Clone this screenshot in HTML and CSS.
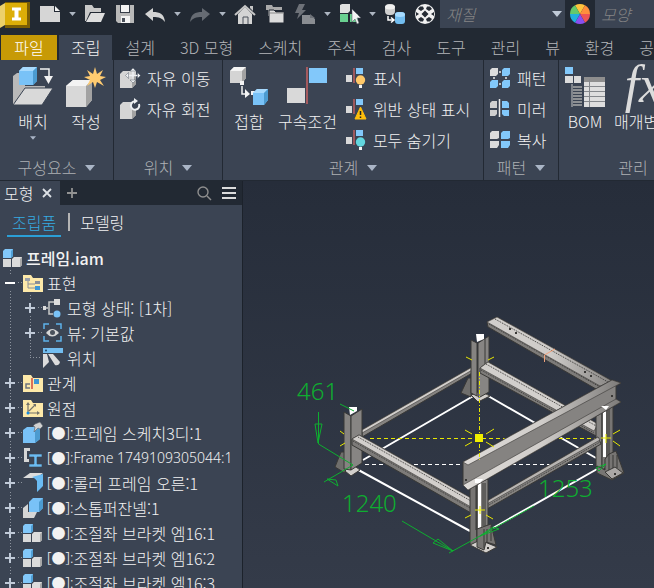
FILE: index.html
```html
<!DOCTYPE html>
<html lang="ko">
<head>
  <meta charset="UTF-8">
  <meta name="viewport" content="width=device-width, initial-scale=1.0">
  <title>프레임.iam</title>
  <link rel="stylesheet" href="styles.css">
</head>
<body>
  <!-- shared icon shapes -->
  <svg class="defs" width="0" height="0" aria-hidden="true">
    <symbol id="caret" viewBox="0 0 10 6"><path d="M0 0h10L5 6z"/></symbol>
    <symbol id="folder" viewBox="0 0 20 18"><path d="M0 1h8l2 3h10v14H0z" fill="#fde9a9"/></symbol>
    <symbol id="assembly" viewBox="0 0 20 20">
      <path d="M0 3l2-2h8v7l-2 2H0z" fill="#82c8fa"/><path d="M8 3l2-2v7l-2 2z" fill="#4f9fd6"/>
      <path d="M0 11h8v8H0z" fill="#d9d9d9"/>
      <path d="M9 11l2-2h8v8l-2 2H9z" fill="#dcdcdc"/><path d="M17 11l2-2v8l-2 2z" fill="#a9a9a9"/>
    </symbol>
    <symbol id="relation" viewBox="0 0 20 20">
      <path d="M0 7h6v7H0z" fill="#d9d9d9"/><path d="M8 0v15" stroke="#c96262" stroke-width="1.4"/>
      <path d="M10 0h7v6h-7z" fill="#82c8fa"/>
    </symbol>
  </svg>

  <div class="app">
    <header class="quickbar">
      <div class="tools">
        <button class="logo" aria-label="Inventor">
          <svg viewBox="0 0 30 28" width="30" height="28">
            <path d="M5 2h25v26H5z" fill="#7b5e04"/><path d="M0 6l5-3v22l-5 3z" fill="#ecd06a"/><path d="M5 3h22v22H5z" fill="#dcae08"/>
            <path d="M12 7.500h9v3h-2.500v7h2.500v3h-9v-3h2.500v-7H12z" fill="#fff"/>
          </svg>
        </button>
        <button aria-label="새로 만들기"><svg viewBox="0 0 20 20"><path d="M0 2h14v6h6v10H0z" fill="#d6d6d6"/><path d="M15 2l5 5h-5z" fill="#f2f2f2"/></svg></button>
        <button class="drop" aria-label="새로 만들기 목록"><svg><use href="#caret"/></svg></button>
        <button aria-label="열기"><svg viewBox="0 0 20 20"><path d="M0 1h7l2 3h7v4H5l-4 9H0z" fill="#c9c9c9"/><path d="M6 9h14l-4 9H1z" fill="#dedede"/></svg></button>
        <button aria-label="저장"><svg viewBox="0 0 20 20"><path d="M1 1h18v18H3l-2-2z" fill="#b9b9b9"/><path d="M5 1h10v8H5z" fill="#363d48"/><path d="M6 1h8v7H6zM6 12h9v7H6z" fill="#f4f4f4"/><path d="M7 14h3v4H7z" fill="#4a505a"/></svg></button>
        <button aria-label="명령 취소"><svg viewBox="0 0 20 20"><path d="M0 10l8-6v4c7 0 11 2 12 10-3-4-6-5-12-5v4z" fill="#d4d4d4"/></svg></button>
        <button class="drop" aria-label="취소 목록"><svg><use href="#caret"/></svg></button>
        <button aria-label="명령 복구"><svg viewBox="0 0 20 20"><path d="M20 10l-8-6v4C5 8 1 10 0 18c3-4 6-5 12-5v4z" fill="#666b73"/></svg></button>
        <button class="drop" aria-label="복구 목록"><svg><use href="#caret"/></svg></button>
        <button aria-label="홈"><svg viewBox="0 0 20 20"><path d="M3 10v10h14V10l-7-7z" fill="#d4d4d4"/><path d="M0 11L10 2l10 9" fill="none" stroke="#c6c6c6" stroke-width="2"/><path d="M15 2h3v5l-3-3z" fill="#c6c6c6"/><path d="M8 20v-7h5v7" fill="#d4d4d4" stroke="#4a505a"/></svg></button>
        <button aria-label="프로젝트"><svg viewBox="0 0 20 20"><path d="M1 1h6l1 2h9v3H9v6H3V6H1z" fill="#aaa"/><path d="M4 6h5l2 2h8v11H4z" fill="#dcdcdc" stroke="#222933"/><path d="M5 9h14" stroke="#8b8b8b"/></svg></button>
        <button aria-label="업데이트"><svg viewBox="0 0 20 20"><path d="M4 0h6L7 6h4L2 15l2-6H0z" fill="#6d7178"/><path d="M7 11h8l5 4v5H7z" fill="#8a8d92"/><path d="M15 10l5 4h-5z" fill="#6d7178"/></svg></button>
        <button class="drop" aria-label="업데이트 목록"><svg><use href="#caret"/></svg></button>
        <button aria-label="선택 우선순위"><svg viewBox="0 0 20 20"><path d="M0 1l2-1h8v7l-2 2H0z" fill="#e0e0e0"/><path d="M0 10h8v8H0zM10 10h8v8h-8z" fill="#69cf90"/><path d="M12 5v13l3-3 2 5 2-1-2-5h4z" fill="#f4f4f4" stroke="#4c535e" stroke-width=".5"/></svg></button>
        <button class="drop" aria-label="선택 목록"><svg><use href="#caret"/></svg></button>
        <button aria-label="대치"><svg viewBox="0 0 20 20"><rect x="0" y="0" width="10" height="11" rx="4" fill="#cfcfcf"/><ellipse cx="5" cy="3" rx="5" ry="2.500" fill="#f0f0f0"/><path d="M3 12v4h5M6 13.500l3 2.500-3 2.500" fill="none" stroke="#fff" stroke-width="1.500"/><rect x="10" y="8" width="10" height="12" rx="3" fill="#72bdf0"/><ellipse cx="15" cy="10.500" rx="5" ry="2.500" fill="#a6dbff"/></svg></button>
        <button aria-label="재질 편집"><svg viewBox="0 0 20 20"><circle cx="10" cy="10" r="10" fill="#f2f2f2"/><g fill="#252b34"><path d="M10 6.500l3.500 3.500-3.500 3.500L6.500 10zM5 2.500l3 0 1 2.500-3 2-3-2zM12 2.500h3l2 2.500-3 2-3-2zM5 17.500h3l1-2.500-3-2-3 2zM12 17.500h3l2-2.500-3-2-3 2z"/><path d="M1 8l3 2-3 2zM19 8l-3 2 3 2z"/></g></svg></button>
      </div>
      <div class="appearance">
        <div class="picker">
          <select aria-label="재질"><option>재질</option></select>
          <svg><use href="#caret"/></svg>
        </div>
        <button aria-label="모양 편집"><svg viewBox="0 0 20 20"><path d="M10 10L5 1.340A10 10 0 0 1 15 1.340z" fill="#ffc33c"/><path d="M10 10L15 1.340A10 10 0 0 1 20 10z" fill="#ff8f3c"/><path d="M10 10H20A10 10 0 0 1 15 18.660z" fill="#ee5555"/><path d="M10 10l5 8.660a10 10 0 0 1-10 0z" fill="#8a4ff0"/><path d="M10 10L5 18.660A10 10 0 0 1 0 10z" fill="#22b0dd"/><path d="M10 10H0A10 10 0 0 1 5 1.340z" fill="#65c96b"/></svg></button>
        <div class="picker">
          <select aria-label="모양"><option>모양</option></select>
          <svg><use href="#caret"/></svg>
        </div>
      </div>
    </header>

    <nav class="tabs">
      <button class="tab file">파일</button>
      <button class="tab active">조립</button>
      <button class="tab">설계</button>
      <button class="tab">3D 모형</button>
      <button class="tab">스케치</button>
      <button class="tab">주석</button>
      <button class="tab">검사</button>
      <button class="tab">도구</button>
      <button class="tab">관리</button>
      <button class="tab">뷰</button>
      <button class="tab">환경</button>
      <button class="tab">공동</button>
    </nav>

    <section class="ribbon">
      <div class="group">
        <div class="commands centered">
          <button class="large">
            <svg viewBox="0 0 40 40"><path d="M0 9l4-3h8v13h20v3L12 37H0z" fill="#b9b9b9"/><path d="M0 38l12-17h28L29 38z" fill="#d9d9d9" stroke="#3b4453" stroke-width="1"/><path d="M6 4l4-4h14v14l-4 4H6z" fill="#79c2f7"/><path d="M6 4l4-4h14l-4 4z" fill="#a8dafd"/><path d="M20 4l4-4v14l-4 4z" fill="#4c9bd0"/><path d="M27 2h9v8" fill="none" stroke="#f2f2f2" stroke-width="1.500"/><path d="M31 9h9l-4.500 8z" fill="#f2f2f2"/></svg>
            <span>배치</span>
            <svg class="more"><use href="#caret"/></svg>
          </button>
          <button class="large">
            <svg viewBox="0 0 40 40"><path d="M0 19l7-6h19v20l-6 7H0z" fill="#d8d8d8"/><path d="M0 19l7-6h19l-6 6z" fill="#f3f3f3"/><path d="M20 19l6-6v20l-6 7z" fill="#a2a2a2"/><path d="M29 0l2 7 6-4-3 6 6 1-6 3 4 6-7-4-2 6-2-6-6 4 3-6-6-3 6-1-3-6 6 4z" fill="#ffcb70"/></svg>
            <span>작성</span>
          </button>
        </div>
        <h2>구성요소 <svg><use href="#caret"/></svg></h2>
      </div>

      <div class="group">
        <div class="commands">
          <div class="stack">
            <button class="small"><svg viewBox="0 0 20 20"><path d="M0 6l3-3h13v13l-4 4H0z" fill="#d5d5d5"/><path d="M12 10l4-4v10l-4 4z" fill="#a2a2a2"/><path d="M13 2v11M7 7.500h12" stroke="#eef0f2" stroke-width="1.500"/><path d="M13 0l3 3h-6zM13 15l3-3h-6zM5.500 7.500l3-3v6zM20.500 7.500l-3-3v6z" fill="#eef0f2" stroke="#3b4453" stroke-width=".4"/></svg>자유 이동</button>
            <button class="small"><svg viewBox="0 0 20 20"><path d="M0 6l3-3h13v13l-4 4H0z" fill="#d5d5d5"/><path d="M12 10l4-4v10l-4 4z" fill="#a2a2a2"/><circle cx="15" cy="6.500" r="4.500" fill="#3b4453"/><path d="M19 5a4.200 4.200 0 1 1-4-2.700" fill="none" stroke="#eef0f2" stroke-width="2"/><path d="M14-1v6l4-3z" fill="#eef0f2"/></svg>자유 회전</button>
          </div>
        </div>
        <h2>위치 <svg><use href="#caret"/></svg></h2>
      </div>

      <div class="group">
        <div class="commands">
          <button class="large">
            <svg viewBox="0 0 40 40"><path d="M1 4l4-4h12v11l-4 5H1z" fill="#d4d4d4"/><path d="M1 4l4-4h12l-4 4z" fill="#f4f4f4"/><path d="M13 4l4-4v11l-4 5z" fill="#a2a2a2"/><path d="M13 19v8h7" fill="none" stroke="#f4f4f4" stroke-width="1.500"/><path d="M16 22l5 5-5 4zM11 14h4v4h-4zM22 24h4v4h-4z" fill="#f4f4f4"/><path d="M24 26l4-4h11v11l-4 5H24z" fill="#79c2f7"/><path d="M24 26l4-4h11l-4 4z" fill="#a8dafd"/><path d="M35 26l4-4v11l-4 5z" fill="#4c9bd0"/></svg>
            <span>접합</span>
          </button>
          <button class="large">
            <svg viewBox="0 0 40 40"><path d="M0 21h18v15H0z" fill="#d9d9d9"/><path d="M20 0v37" stroke="#c96262" stroke-width="1.500"/><path d="M22 1h18v15H22z" fill="#82c8fa"/></svg>
            <span>구속조건</span>
          </button>
          <div class="stack">
            <button class="small"><svg viewBox="0 0 20 20"><use href="#relation" width="20" height="20"/><circle cx="14.500" cy="12" r="4.700" fill="#ffc868"/><path d="M13 17h3v3h-3z" fill="#f4f4f4"/></svg>표시</button>
            <button class="small"><svg viewBox="0 0 20 20"><use href="#relation" width="20" height="20"/><path d="M14.500 8L20 20H9z" fill="#ffbe0a" stroke="#ffbe0a"/><path d="M14.500 12v4M14.500 17.500v1.500" stroke="#222" stroke-width="1.500"/></svg>위반 상태 표시</button>
            <button class="small"><svg viewBox="0 0 20 20"><use href="#relation" width="20" height="20"/><circle cx="14.500" cy="12" r="4.700" fill="#62d6de"/><path d="M13 17h3v3h-3z" fill="#f4f4f4"/></svg>모두 숨기기</button>
          </div>
        </div>
        <h2>관계 <svg><use href="#caret"/></svg></h2>
      </div>

      <div class="group">
        <div class="commands">
          <div class="stack">
            <button class="small"><svg viewBox="0 0 20 20"><path d="M0 2l2-2h6v6L6 8H0z" fill="#dcdcdc"/><path d="M12 2l2-2h6v6l-2 2h-6zM0 14l2-2h6v6l-2 2H0zM12 14l2-2h6v6l-2 2h-6z" fill="#82c8fa"/><path d="M9 4h2M4 9v2M9 16h2M16 9v2" stroke="#e8e8e8" stroke-width="1.500"/></svg>패턴</button>
            <button class="small"><svg viewBox="0 0 20 20"><path d="M0 4l2-2h5v7H0zM0 11h7v4l-2 2H0z" fill="#d0d0d0"/><path d="M9.500 0v18" stroke="#e8e8e8" stroke-width="1.500"/><path d="M12 2h5l2 2v5h-7zM12 11h7v6h-5l-2-2z" fill="#82c8fa"/></svg>미러</button>
            <button class="small"><svg viewBox="0 0 20 20"><path d="M0 3l2-2h7v7L7 9H0zM0 11h9v4l-2 3H0z" fill="#dcdcdc"/><path d="M11 3l2-2h7v7l-2 1h-7zM11 11h9v4l-2 3h-7z" fill="#82c8fa"/></svg>복사</button>
          </div>
        </div>
        <h2>패턴 <svg><use href="#caret"/></svg></h2>
      </div>

      <div class="group">
        <div class="commands">
          <button class="large">
            <svg viewBox="0 0 40 40"><path d="M0 0h8v7H0z" fill="#82c8fa"/><path d="M0 9h8v7H0zM9 9h7v7H9z" fill="#dcdcdc"/><path d="M7 17v23" stroke="#c4c4c4"/><path d="M8 20h9M8 23h9M8 26h9M8 29h9M8 32h9M8 35h9M8 38h9" stroke="#aaa" stroke-width="1.500"/><path d="M19 10h21v5H19z" fill="#8e8e8e"/><path d="M19 15h21v25H19z" fill="#dedede"/><path d="M19 19.500h21M19 24.500h21M19 29.500h21M19 34.500h21M24.500 12v28" stroke="#85888c"/></svg>
            <span>BOM</span>
          </button>
          <button class="large">
            <span class="fx">fx</span>
            <span>매개변수</span>
          </button>
        </div>
        <h2>관리 <svg><use href="#caret"/></svg></h2>
      </div>
    </section>

    <main>
      <aside class="browser">
        <div class="browser-tabs">
          <div class="browser-tab">모형
            <button aria-label="닫기"><svg viewBox="0 0 10 10" width="10" height="10"><path d="M1 1l8 8M9 1L1 9" stroke="#dde1e6" stroke-width="1.800"/></svg></button>
          </div>
          <button aria-label="패널 추가"><svg viewBox="0 0 10 10" width="10" height="10"><path d="M5 0v10M0 5h10" stroke="#929292" stroke-width="1.800"/></svg></button>
          <span class="spacer"></span>
          <button aria-label="검색"><svg viewBox="0 0 14 14" width="14" height="14"><circle cx="6" cy="6" r="5" fill="none" stroke="#8f8f8f" stroke-width="1.400"/><path d="M10 10l4 4" stroke="#8f8f8f" stroke-width="1.500"/></svg></button>
          <button aria-label="메뉴"><svg viewBox="0 0 14 12" width="14" height="12"><path d="M0 1h14M0 6h14M0 11h14" stroke="#dcdcdc" stroke-width="2"/></svg></button>
        </div>
        <div class="modes">
          <button class="mode selected">조립품</button>
          <button class="mode">모델링</button>
        </div>

        <div class="root"><svg><use href="#assembly"/></svg>프레임.iam</div>
        <ul class="tree">
          <li>
            <div class="node">
              <button class="expander open" aria-label="접기"></button>
              <svg viewBox="0 0 20 20"><use href="#folder" width="20" height="18" y="1"/><path d="M5 7v8h7M5 11h7" fill="none" stroke="#8a8f98"/><path d="M2 5h5v3H2z" fill="#9aa0a8"/><path d="M12 8h5v3h-5z" fill="#8a8f98"/><path d="M12 13h5v4h-5z" fill="#3e97d6"/></svg>
              표현
            </div>
            <ul class="branch">
              <li class="node">
                <button class="expander" aria-label="펼치기"></button>
                <svg viewBox="0 0 20 20"><path d="M1 10h4M12 4H6v12h4" fill="none" stroke="#c9c9c9" stroke-width="1.500"/><path d="M0 8h3v4H0zM11 1h6v6h-6z" fill="#dcdcdc"/><circle cx="14" cy="16" r="3.500" fill="#79c2f7"/></svg>
                모형 상태: [1차]
              </li>
              <li class="node">
                <button class="expander" aria-label="펼치기"></button>
                <svg viewBox="0 0 20 20"><path d="M1 6V1h5M13 1h5v5M18 13v5h-5M6 18H1v-5" fill="none" stroke="#5eb1ea" stroke-width="1.500"/><path d="M3 10q6-8 13 0-7 7-13 0z" fill="#d6d6d6"/><circle cx="9.500" cy="9.500" r="2.500" fill="#4a515c"/></svg>
                뷰: 기본값
              </li>
              <li class="node leaf">
                <svg viewBox="0 0 20 20"><path d="M0 0h20v5H0z" fill="#72bdf0"/><path d="M0 6h4l2 8-6 6zM5 6h5l7 8q-1 4-5 3z" fill="#dcdcdc"/><circle cx="3" cy="2.500" r="1" fill="#246"/></svg>
                위치
              </li>
            </ul>
          </li>
          <li class="node">
            <button class="expander" aria-label="펼치기"></button>
            <svg viewBox="0 0 20 20"><use href="#folder" width="20" height="18" y="1"/><path d="M7 11H3v4h4" fill="none" stroke="#6e747d" stroke-width="1.500"/><path d="M9 5v11" stroke="#d04a3f" stroke-width="1.500"/><path d="M11 6h5v5h-5z" fill="#3e97d6"/></svg>
            관계
          </li>
          <li class="node">
            <button class="expander" aria-label="펼치기"></button>
            <svg viewBox="0 0 20 20"><use href="#folder" width="20" height="18" y="1"/><path d="M5 15V6M5 15h10M6 13l6-6" stroke="#74736a" stroke-width="1.200"/><path d="M3 7l2-3 2 3zM14 13l3 2-3 2zM10 6h3v3z" fill="#74736a"/><circle cx="5" cy="15" r="1.500" fill="#168be0"/></svg>
            원점
          </li>
          <li class="node">
            <button class="expander" aria-label="펼치기"></button>
            <svg viewBox="0 0 20 20"><path d="M0 7l4-3h13v12l-5 4H0z" fill="#79c2f7"/><path d="M12 8l5-4v12l-5 4z" fill="#4c9bd0"/><path d="M12 1l5-2 3 4-3 3-2-1-4 4 1-5-2-1z" fill="#d0d0d0" stroke="#555c67" stroke-width=".6"/></svg>
            <span class="mark">[●]:</span>프레임 스케치3디:1
          </li>
          <li class="node">
            <button class="expander" aria-label="펼치기"></button>
            <svg viewBox="0 0 20 20"><path d="M7 1.500H2.500v11H6" fill="none" stroke="#d6d6d6" stroke-width="3"/><path d="M6 6h13v3h-5v7h5v3H6v-3h5V9H6z" fill="#6bbcf3" stroke="#3b4453" stroke-width=".6"/></svg>
            <span class="mark">[●]:Frame 1749109305044:1</span>
          </li>
          <li class="node">
            <button class="expander" aria-label="펼치기"></button>
            <svg viewBox="0 0 20 20"><path d="M0 5l7-5h13l-6 5z" fill="#dcdcdc"/><path d="M9 4l11-3v12l-6 6V8q-2-3-5-4z" fill="#6bbcf3"/></svg>
            <span class="mark">[●]:</span>롤러 프레임 오른:1
          </li>
          <li class="node">
            <button class="expander" aria-label="펼치기"></button>
            <svg viewBox="0 0 20 20"><path d="M0 10l5-4v8h9l-3 6H0z" fill="#d6d6d6"/><path d="M6 4l4-4h10v10l-4 4H6z" fill="#79c2f7"/><path d="M16 4l4-4v10l-4 4z" fill="#4c9bd0"/></svg>
            <span class="mark">[●]:</span>스톱퍼잔넬:1
          </li>
          <li class="node">
            <button class="expander" aria-label="펼치기"></button>
            <svg><use href="#assembly"/></svg>
            <span class="mark">[●]:</span>조절좌 브라켓 엠16:1
          </li>
          <li class="node">
            <button class="expander" aria-label="펼치기"></button>
            <svg><use href="#assembly"/></svg>
            <span class="mark">[●]:</span>조절좌 브라켓 엠16:2
          </li>
          <li class="node">
            <button class="expander" aria-label="펼치기"></button>
            <svg><use href="#assembly"/></svg>
            <span class="mark">[●]:</span>조절좌 브라켓 엠16:3
          </li>
        </ul>
      </aside>

      <section class="viewport">
        <svg class="model" viewBox="243 181 411 407" preserveAspectRatio="xMinYMin meet" role="img" aria-label="프레임 모형">
          <!-- base sketch -->
          <g stroke="#fff" stroke-width="2" fill="none">
            <path d="M475 395L363 460M483 393L596 458M353 467L470 531M493 528L606 464"/>
            <path d="M365 464.500H597" stroke-width="1" stroke-dasharray="4 3"/>
          </g>
          <g stroke="#e8e800" fill="none">
            <path d="M370 438.500H606" stroke-dasharray="4 3"/>
          </g>

          <g stroke="#393836" stroke-width="1" stroke-linejoin="round">
            <!-- back left rail -->
            <path d="M362 430L474 366V372L362 437z" fill="#858381"/>
            <path d="M362 430L474 366V369L362 433z" fill="#d2cfcc" stroke-width=".6"/>
            <!-- back post -->
            <path d="M468 378L461 393 471 397V378z" fill="#6f6e6c"/>
            <path d="M471 395L478 402 490 396 480 391z" fill="#d2cfcc"/>
            <path d="M471 340L477 343V396L471 393z" fill="#858381"/>
            <path d="M478 343L489 336V392L480 397H478z" fill="#878583"/>
            <path d="M485 339V366" fill="none"/>
            <path d="M476 334H484V339L477 342z" fill="#fff" stroke="none"/>
            <!-- back right rail -->
            <path d="M480 368L488 362 598 424V437L480 373z" fill="#7d7b79"/>
            <path d="M480 368L488 362 598 424 594 431z" fill="#d2cfcc" stroke-width=".6"/>
            <path d="M486 364L598 427M481 370L594 433" fill="none" stroke-dasharray="1 1"/>
            <!-- upper channel -->
            <path d="M487 322L497 317 614 382 606 394 596 389 488 327z" fill="#7d7b79"/>
            <path d="M487 322L497 317 614 382 600 386z" fill="url(#steel)" stroke-width=".6"/>
            <path d="M495 319L608 382M489 324L600 387" fill="none" stroke-dasharray="1 1"/>
            <path d="M509 329h2M515 333h2M584 372h2M590 376h2" stroke-width="2"/>
            <!-- right post -->
            <path d="M596 416L602 411V470L596 466z" fill="#858381"/>
            <path d="M602 411L613 405V464L602 470z" fill="#777573"/>
            <path d="M609 407V460M607 408V466" fill="none"/>
            <path d="M603 410H606V457H603z" fill="#fff" stroke="none"/>
            <path d="M609 454L616 451 624 473 612 480 597 473V466L605 470V459z" fill="#777573"/>
            <path d="M605 472L615 467 623 473 612 479z" fill="#aaa7a5"/>
            <path d="M609 454V470M613 455V468M617 455V468" fill="none"/>
            <path d="M614 474h2" stroke-width="2"/>
            <!-- lower front right rail -->
            <path d="M487 501L598 437 601 444 487 509z" fill="#858381"/>
            <path d="M487 501L598 437 600 440 487 504z" fill="#b8b5b2" stroke-width=".6"/>
            <path d="M487 506L600 442" fill="none" stroke-dasharray="1 1"/>
            <!-- left post -->
            <path d="M341 452L335 467 345 473V452z" fill="#6f6e6c"/>
            <path d="M345 471L351 476 360 470 352 464z" fill="#d2cfcc"/>
            <path d="M344 412L351 416V470L344 469z" fill="#858381"/>
            <path d="M351 416L362 409V463L351 470z" fill="#878583"/>
            <path d="M349 407H357V411L350 415z" fill="#fff" stroke="none"/>
            <!-- front left rail -->
            <path d="M352 439L359 435 471 498V513L352 445z" fill="#7d7b79"/>
            <path d="M352 439L359 435 471 498V507z" fill="#d2cfcc" stroke-width=".6"/>
            <path d="M358 437L471 501M353 441L470 508" fill="none" stroke-dasharray="1 1"/>
            <!-- front post -->
            <path d="M470 487L477 482V547L470 544z" fill="#777573"/>
            <path d="M477 482L488 479V528L477 536z" fill="#858381"/>
            <path d="M476 483V530M483 483V526M485 483V526" fill="none"/>
            <path d="M478 483H481V528H478z" fill="#fff" stroke="none"/>
            <path d="M470 545L480 540 497 547 486 553z" fill="#d2cfcc"/>
            <path d="M477 529L491 524 496 545 486 542 484 550 477 547z" fill="#777573"/>
            <path d="M484 529V548M487 529V542M491 526V541" fill="none"/>
            <path d="M487 548h2" stroke-width="2"/>
            <!-- front I-beam -->
            <path d="M463 462L612 380 621 383 616 386V400L621 402 468 490 463 485z" fill="#858381"/>
            <path d="M463 462L612 380 621 383 468 465z" fill="url(#flange)" stroke-width=".6"/>
            <path d="M463 485L616 399 621 402 468 490z" fill="url(#flange)" stroke-width=".6"/>
            <path d="M465 480h2M611 396h2" stroke-width="2"/>
            <path d="M475 479H483L480 483H475zM601 406H609L606 410z" fill="#fff" stroke="none"/>
          </g>
          <path d="M544.500 362V355L555 349" fill="none" stroke="#f0a27c"/>

          <!-- work points -->
          <g stroke="#e8e800" fill="none">
            <path d="M479.500 372V460" stroke-dasharray="4 2 1 2"/>
            <path d="M465 430L472 434M486 434L494 429M465 446L472 442M486 442L494 447M466 357L472 360M488 360L494 357M340 431L344 434M340 446L345 443M613 434L620 430M613 441L620 446M465 518L471 515M486 515L493 519M475 510h10M480 506v8M601 438h10M606 434v9"/>
          </g>
          <path d="M475 434h8v8h-8z" fill="#efef00"/>

          <!-- dimensions -->
          <g stroke="#0eae30" fill="none">
            <path d="M318.500 412V444L353 465M340 404L354 411M315 424L318 443 322 424zM353 465L324 482"/>
            <path d="M327 479L338 486M327 479L336 480 338 486"/>
            <path d="M402 521L453 551M433 543L438 539 453 551zM449 553L480 536L534 506"/>
            <path d="M480 536L493 527 499 529zM606 464L596 468 599 471z"/>
          </g>
          <g class="dimension">
            <text x="297" y="400">461</text>
            <text x="342" y="512">1240</text>
            <text x="538" y="497">1253</text>
          </g>
          <defs>
            <linearGradient id="steel"><stop offset="0" stop-color="#d2cfcc"/><stop offset=".5" stop-color="#cfccc9"/><stop offset="1" stop-color="#858381"/></linearGradient>
            <linearGradient id="flange"><stop offset="0" stop-color="#dedbd8"/><stop offset=".5" stop-color="#d0cdca"/><stop offset="1" stop-color="#7d7b79"/></linearGradient>
          </defs>
        </svg>
      </section>
    </main>
  </div>
</body>
</html>
```

FILE: styles.css
```css
* {
  box-sizing: border-box;
}
body {
  margin: 0;
  background-color: #222933;
  color: #f2f2f2;
  font-family: "Noto Sans CJK KR", sans-serif;
  font-size: 16px;
  font-weight: 300;
  line-height: 20px;
  overflow: hidden;
}
button {
  background: none;
  border: none;
  padding: 0;
  color: inherit;
  font: inherit;
  cursor: pointer;
  flex-shrink: 0;
}
svg {
  display: block;
  overflow: visible;
  flex-shrink: 0;
}
ul {
  list-style: none;
  margin: 0;
  padding: 0;
}
.defs {
  position: absolute;
}
.app {
  display: flex;
  flex-direction: column;
  height: 100vh;
}

/* quick access bar */
.quickbar {
  display: flex;
  gap: 5px;
  height: 28px;
  margin-bottom: 7px;
}
.tools,
.appearance {
  display: flex;
  align-items: center;
  flex-shrink: 0;
}
.tools {
  gap: 10px;
}
.appearance {
  gap: 5px;
}
.quickbar button svg {
  width: 20px;
  height: 20px;
}
.quickbar .logo svg {
  width: 30px;
  height: 28px;
}
.quickbar .drop {
  width: 5px;
}
.quickbar .drop svg {
  width: 7px;
  height: 4px;
  margin-left: -1px;
  fill: #aeb6c2;
}
.picker {
  display: grid;
  align-items: center;
  width: 125px;
}
.picker select,
.picker svg {
  grid-area: 1 / 1;
}
.picker select {
  appearance: none;
  width: 100%;
  height: 28px;
  padding: 0 6px;
  border: none;
  border-radius: 0;
  background-color: #3b4453;
  color: #858585;
  font: inherit;
  font-style: italic;
}
.picker svg {
  justify-self: end;
  width: 10px;
  height: 6px;
  margin-right: 3px;
  fill: #c0cad8;
  pointer-events: none;
}

/* ribbon tabs */
.tabs {
  display: flex;
  gap: 1px;
  height: 25px;
  padding-left: 1px;
}
.tab {
  padding: 0 12px 2px;
  color: #b4b6b9;
}
.tab.file {
  width: 56px;
  margin-right: 1px;
  background-color: #c79a06;
  color: #fff;
}
.tab.active {
  background-color: #3b4453;
  color: #f2f2f2;
}

/* ribbon */
.ribbon {
  display: grid;
  grid-template-columns: 114px 109px 261px 75px minmax(168px, 1fr);
  border-bottom: 1px solid #222933;
  background-color: #3b4453;
}
.group {
  border-right: 1px solid #222933;
}
.commands {
  display: flex;
  gap: 9px;
  height: 95px;
  padding: 2px 0 0 6px;
}
.commands.centered {
  justify-content: center;
  gap: 13px;
}
.large {
  display: flex;
  flex-direction: column;
  align-items: center;
  min-width: 40px;
  padding-top: 5px;
  white-space: nowrap;
}
.large svg {
  width: 40px;
  height: 40px;
  margin-bottom: 4px;
}
.large .more {
  width: 6px;
  height: 4px;
  margin-top: 5px;
  fill: #aab5c6;
}
.fx {
  height: 40px;
  margin-bottom: 4px;
  color: #dcdcdc;
  font-family: "Liberation Serif", serif;
  font-size: 52px;
  font-style: italic;
  line-height: 36px;
}
.stack {
  display: flex;
  flex-direction: column;
}
.small {
  display: flex;
  align-items: center;
  gap: 7px;
  height: 31px;
  white-space: nowrap;
}
.small svg {
  width: 20px;
  height: 20px;
}
.group h2 {
  display: flex;
  align-items: center;
  justify-content: center;
  gap: 9px;
  height: 25px;
  margin: 0;
  padding-bottom: 2px;
  color: #adb0b4;
  font-size: 16px;
  font-weight: 300;
}
.group h2 svg {
  width: 10px;
  height: 6px;
  margin-top: 2px;
  fill: #aab5c6;
}

/* model browser */
main {
  display: flex;
  flex: 1;
  min-height: 0;
}
.browser {
  flex: 0 0 243px;
  overflow: hidden;
  border-right: 1px solid #1c222b;
  background-color: #3b4453;
}
.browser-tabs {
  display: flex;
  align-items: center;
  gap: 11px;
  height: 24px;
  padding-right: 6px;
  background-color: #222933;
}
.browser-tab {
  display: flex;
  align-items: center;
  gap: 9px;
  width: 60px;
  height: 24px;
  padding-left: 4px;
  background-color: #3b4453;
  margin-right: -4px;
}
.spacer {
  flex: 1;
}
.modes {
  display: flex;
  height: 32px;
  margin-bottom: 8px;
  padding-left: 7px;
}
.mode {
  padding: 5px 5px 2px;
  border-bottom: 2px solid transparent;
}
.mode.selected {
  border-bottom-color: #2b9fd6;
  color: #35abe2;
}
.mode + .mode {
  display: flex;
  align-items: center;
  gap: 10px;
  margin-left: 2px;
}
.mode + .mode::before {
  content: "";
  width: 2px;
  height: 18px;
  background-color: #b4b4b4;
}
.root,
.node {
  display: flex;
  align-items: center;
  height: 25px;
  white-space: nowrap;
}
.root {
  gap: 3px;
  padding-left: 3px;
  font-weight: 500;
}
.root svg,
.node svg {
  width: 20px;
  height: 20px;
}
.node svg {
  margin-right: 4px;
}
.tree,
.branch {
  background: repeating-linear-gradient(#8d949e 0 1px, transparent 1px 3px) 10px 0 / 1px 100% no-repeat;
}
.branch {
  margin-left: 20px;
  background-size: 1px calc(100% - 12px);
}
.node {
  background: repeating-linear-gradient(90deg, #8d949e 0 1px, transparent 1px 3px) 18px 12px / 4px 1px no-repeat;
}
.node.leaf {
  padding-left: 23px;
  background-position: 10px 12px;
  background-size: 12px 1px;
}
.expander {
  width: 12px;
  height: 14px;
  margin: 0 7px 0 4px;
  background:
    linear-gradient(#c0cad8, #c0cad8) center / 10px 2px no-repeat,
    linear-gradient(#c0cad8, #c0cad8) center / 2px 10px no-repeat,
    #3b4453;
}
.expander.open {
  background: linear-gradient(#fff, #fff) center / 10px 2px no-repeat, #3b4453;
}
.mark {
  font-family: "Noto Sans", "Noto Sans CJK KR", sans-serif;
  font-size: 14px;
}

/* viewport */
.viewport {
  flex: 1;
  min-width: 0;
  background: linear-gradient(#262d3a, #343b49);
}
.model {
  width: 100%;
  height: 100%;
}
.dimension {
  fill: #0eae30;
  font-family: "Noto Sans", sans-serif;
  font-size: 24px;
}
```
